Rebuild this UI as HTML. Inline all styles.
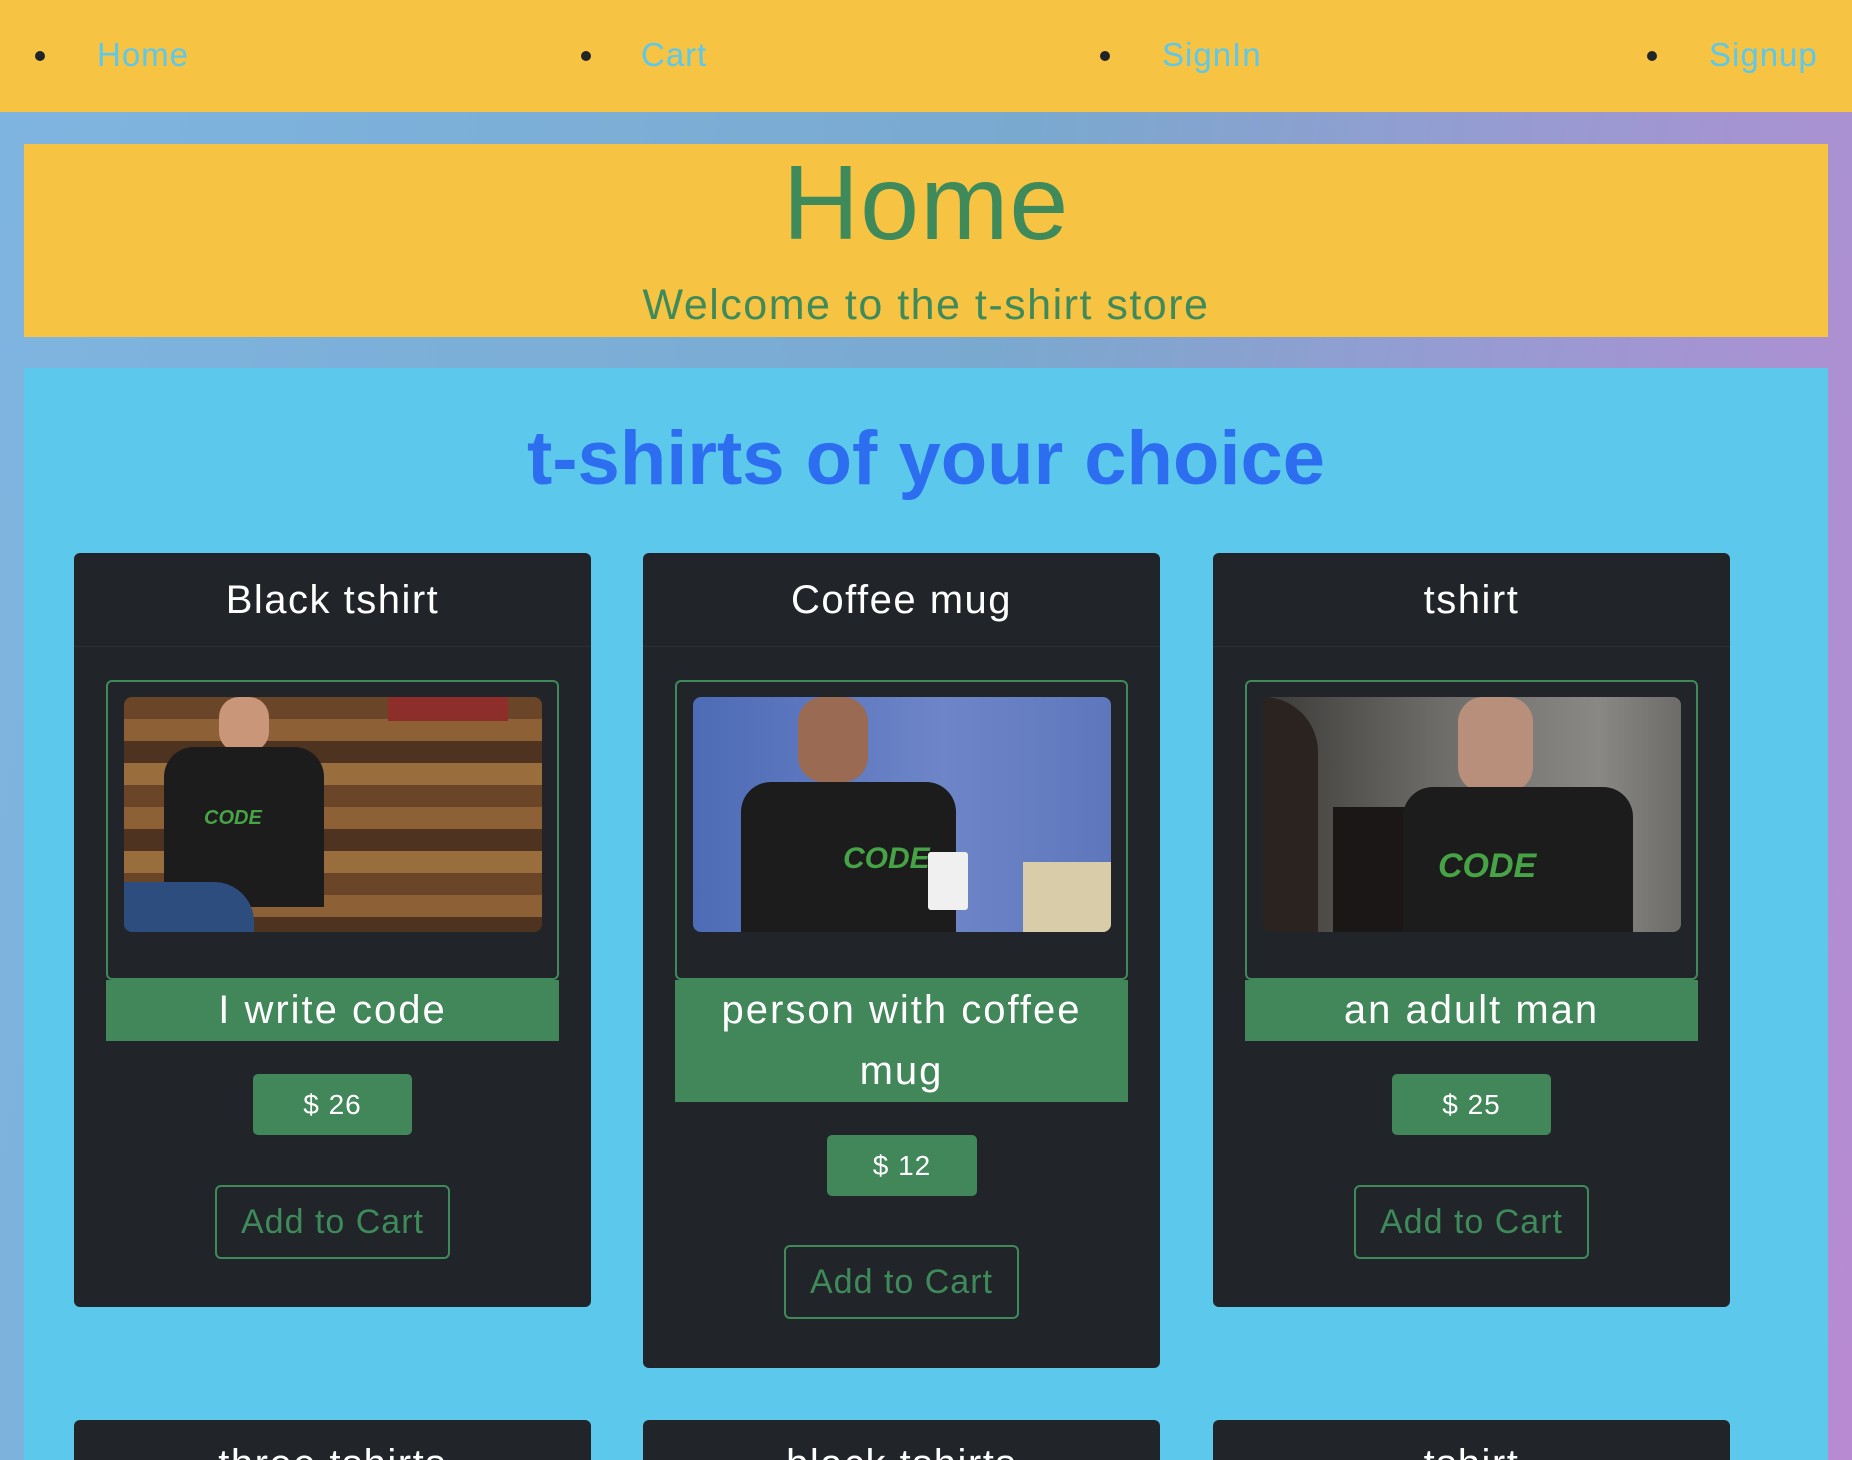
<!DOCTYPE html>
<html style="overflow:hidden;width:1852px;height:1460px"><head><meta charset="utf-8"><style>
*{margin:0;padding:0;box-sizing:border-box}
html,body{overflow:hidden}
body{width:1852px;height:1460px;font-family:"Liberation Sans",sans-serif}
#w{position:relative;width:1852px;height:1460px;overflow:hidden;background:linear-gradient(100deg,#7eb5e0 0%,#7aa9d0 50%,#b88ad2 100%)}
.a{position:absolute}
.nav{left:0;top:0;width:1852px;height:112px;background:#f6c343}
.dot{width:10px;height:10px;border-radius:50%;background:#212529;top:51px}
.nl{top:36px;font-size:33px;color:#5bc8ec;letter-spacing:1px}
.hdr{left:24px;top:144px;width:1804px;height:193px;background:#f6c343;color:#3e8a5b;text-align:center}
.sec{left:24px;top:368px;width:1804px;height:1100px;background:#5bc8ec}
.card{background:#212529;border-radius:6px;width:517px}
.ch{position:absolute;left:0;top:0;width:100%;height:94px;border-bottom:1px solid #2c3036;color:#fff;font-size:40px;text-align:center;line-height:94px;letter-spacing:1.5px}
.fr{position:absolute;left:32px;top:127px;width:453px;height:300px;border:2px solid #3e8a5b;border-radius:6px}
.img{position:absolute;left:16px;top:15px;width:418px;height:235px;border-radius:8px;overflow:hidden}
.cap{position:absolute;left:32px;top:427px;width:453px;background:#41875a;color:#fff;font-size:40px;text-align:center;line-height:61px;letter-spacing:2px}
.pr{position:absolute;background:#41875a;color:#fff;font-size:28px;text-align:center;border-radius:5px;height:61px;line-height:61px;letter-spacing:1px}
.ad{position:absolute;border:2px solid #3e8a5b;color:#3e8a5b;font-size:34px;text-align:center;border-radius:6px;height:74px;line-height:70px;width:235px;letter-spacing:1px}
.shirt{position:absolute;background:#1c1c1c;border-radius:30px 30px 0 0}
.code{position:absolute;color:#46a346;font-weight:bold;font-style:italic}
</style></head><body><div id="w">
<div class="a nav"></div>
<div class="a dot" style="left:35px"></div><div class="a nl" style="left:97px">Home</div>
<div class="a dot" style="left:581px"></div><div class="a nl" style="left:641px">Cart</div>
<div class="a dot" style="left:1100px"></div><div class="a nl" style="left:1162px">SignIn</div>
<div class="a dot" style="left:1647px"></div><div class="a nl" style="left:1709px">Signup</div>

<div class="a hdr"><div style="font-size:106px;line-height:110px;position:absolute;top:4px;width:100%;letter-spacing:1px">Home</div>
<div style="position:absolute;top:137px;width:100%;font-size:43px;letter-spacing:1.5px">Welcome to the t-shirt store</div></div>

<div class="a sec"></div>
<div class="a" style="left:0;top:415px;width:1852px;text-align:center;font-size:76px;color:#2d6ef0;font-weight:bold">t-shirts of your choice</div>

<!-- card 1 -->
<div class="a card" style="left:74px;top:553px;height:754px">
<div class="ch">Black tshirt</div>
<div class="fr"><div class="img" style="background:repeating-linear-gradient(180deg,#6a4527 0 22px,#8d6035 22px 44px,#4e3320 44px 66px,#9a6d3c 66px 88px);">
<div class="a" style="left:264px;top:0;width:120px;height:24px;background:#8e2e2a"></div>
<div class="a" style="left:95px;top:0;width:50px;height:55px;background:#c9967a;border-radius:20px"></div>
<div class="shirt" style="left:40px;top:50px;width:160px;height:160px"></div>
<div class="code" style="left:80px;top:110px;font-size:20px">CODE</div>
<div class="a" style="left:0;top:185px;width:130px;height:50px;background:#2d4d7e;border-radius:0 40px 0 0"></div>
</div></div>
<div class="cap">I write code</div>
<div class="pr" style="left:179px;top:521px;width:159px">$ 26</div>
<div class="ad" style="left:141px;top:632px">Add to Cart</div>
</div>

<!-- card 2 -->
<div class="a card" style="left:643px;top:553px;height:815px">
<div class="ch">Coffee mug</div>
<div class="fr"><div class="img" style="background:linear-gradient(90deg,#4d6bb6,#6e85c8 60%,#5e77bc)">
<div class="a" style="left:105px;top:0;width:70px;height:85px;background:#9a6a52;border-radius:25px"></div>
<div class="shirt" style="left:48px;top:85px;width:215px;height:150px"></div>
<div class="code" style="left:150px;top:145px;font-size:30px">CODE</div>
<div class="a" style="left:235px;top:155px;width:40px;height:58px;background:#f0f0f0;border-radius:3px"></div>
<div class="a" style="left:330px;top:165px;width:90px;height:70px;background:#d8cda8"></div>
</div></div>
<div class="cap">person with coffee<br>mug</div>
<div class="pr" style="left:184px;top:582px;width:150px">$ 12</div>
<div class="ad" style="left:141px;top:692px">Add to Cart</div>
</div>

<!-- card 3 -->
<div class="a card" style="left:1213px;top:553px;height:754px">
<div class="ch">tshirt</div>
<div class="fr"><div class="img" style="background:linear-gradient(90deg,#3b3a38,#6b6a66 40%,#8a8884 80%,#6e6c69)">
<div class="a" style="left:0;top:0;width:55px;height:235px;background:#2a2320;border-radius:0 60px 0 0"></div>
<div class="a" style="left:70px;top:110px;width:160px;height:125px;background:#1a1716"></div>
<div class="a" style="left:195px;top:0;width:75px;height:95px;background:#b88f7a;border-radius:25px"></div>
<div class="shirt" style="left:140px;top:90px;width:230px;height:145px"></div>
<div class="code" style="left:175px;top:150px;font-size:34px">CODE</div>
</div></div>
<div class="cap">an adult man</div>
<div class="pr" style="left:179px;top:521px;width:159px">$ 25</div>
<div class="ad" style="left:141px;top:632px">Add to Cart</div>
</div>

<!-- row 2 -->
<div class="a card" style="left:74px;top:1420px;height:100px"><div class="ch" style="top:-3px;border:none">three tshirts</div></div>
<div class="a card" style="left:643px;top:1420px;height:100px"><div class="ch" style="top:-3px;border:none">black tshirts</div></div>
<div class="a card" style="left:1213px;top:1420px;height:100px"><div class="ch" style="top:-3px;border:none">tshirt</div></div>
</div></body></html>
